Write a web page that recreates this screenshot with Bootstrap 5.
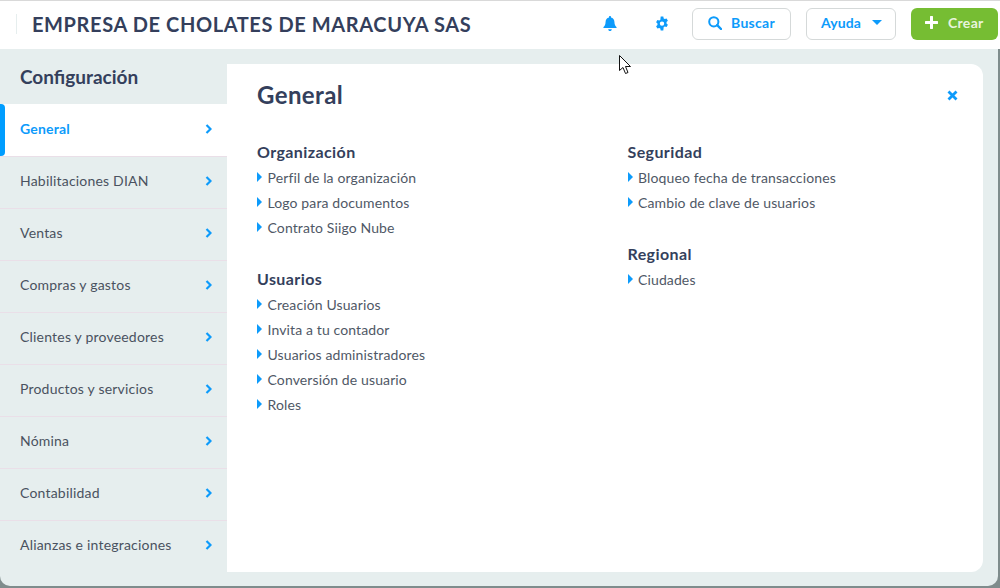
<!DOCTYPE html>
<html lang="es">
<head>
<meta charset="utf-8">
<title>Configuración</title>
<link href="https://cdn.jsdelivr.net/npm/bootstrap@5.3.0/dist/css/bootstrap.min.css" rel="stylesheet">
<style>
html,body{height:100%;}
body{width:1000px;height:588px;overflow:hidden;background:#7f8c8c;font-family:"Lato","Noto Sans",sans-serif;color:#3a4456;position:relative;}
.shell{height:586px;width:998px;display:flex;flex-direction:column;}
.topbar{height:49px;flex:none;background:#fff;border-top:1px solid #d9d9d9;width:1000px;display:flex;align-items:center;padding:0 2px 3px 16px;}
.top-sep{width:1px;height:20px;background:#e6eeee;margin-right:15px;}
.company{font-size:20px;font-weight:700;color:#343f5c;margin:0;letter-spacing:.6px;}
.tool-ico{width:14px;height:15px;display:block;}
.bell-w{margin-right:38px;}
.gear-w{margin-right:23px;}
.tool-btn{height:32px;border:1px solid #d5d9d9;border-radius:6px;background:#fff;color:#0d9bfb;font-size:14px;font-weight:700;display:flex;align-items:center;padding:0 0 2px;letter-spacing:.1px;}
.btn-search{width:99px;padding-left:15px;gap:9px;margin-right:15px;letter-spacing:.3px;}
.btn-help{width:90px;padding-left:14px;gap:11px;margin-right:15px;}
.btn-new{width:87px;height:32px;background:#76bd33;border:0;border-radius:6px;color:#e9f4dd;font-size:14px;font-weight:700;display:flex;align-items:center;padding:0 0 2px 14px;gap:10px;letter-spacing:.3px;}
.caret-d{width:0;height:0;border-left:5px solid transparent;border-right:5px solid transparent;border-top:5px solid #0d9bfb;}
.body-area{flex:1;background:#e6eeee;display:flex;border-radius:0 0 10px 10px;min-height:0;width:998px;}
.side{width:227px;flex:none;}
.side-title{height:55px;font-size:19px;font-weight:700;color:#343f5c;padding:15px 0 0 20px;margin:0;line-height:26px;}
.side-item{height:52px;display:flex;align-items:center;justify-content:space-between;padding:0 15px 4px 20px;border-top:1px solid #eadfe8;font-size:14px;color:#4a5260;position:relative;text-decoration:none;letter-spacing:.2px;}
.side-item.on{background:#fff;color:#0d9bfb;font-weight:700;border-top:0;padding-bottom:3px;}
.side-item.on::before{content:"";position:absolute;left:0;top:0;bottom:0;width:5px;background:#009dff;border-radius:0 4px 4px 0;}
.panel{width:756px;margin:15px 0 14px;background:#fff;border-radius:0 12px 12px 0;padding:17px 25px 0 30px;}
.panel-head{display:flex;justify-content:space-between;align-items:center;height:28px;margin-bottom:31px;}
.panel-title{font-size:24px;font-weight:700;color:#343f5c;margin:0;letter-spacing:.4px;}
.cols{display:grid;grid-template-columns:370.5px 1fr;}
.grp{margin-bottom:27px;}
.grp-title{font-size:16px;font-weight:700;color:#343f5c;margin:0;line-height:24px;height:25px;letter-spacing:.4px;}
.grp-list{list-style:none;padding:0;margin:0;}
.grp-list li{height:25px;line-height:25px;font-size:14px;color:#4f5866;display:flex;align-items:center;gap:5.5px;letter-spacing:.12px;}
.tri{width:0;height:0;border-top:5px solid transparent;border-bottom:5px solid transparent;border-left:5px solid #0d9bfb;margin-top:-2px;}
.cursor{position:absolute;left:619px;top:55px;}
</style>
</head>
<body>
<div class="shell">
  <header class="topbar">
    <div class="top-sep"></div>
    <h1 class="company flex-grow-1">EMPRESA DE CHOLATES DE MARACUYA SAS</h1>
    <span class="bell-w"><svg class="tool-ico" viewBox="0 0 14 15"><path fill="#0d9bfb" d="M7 0c.6 0 1 .4 1 1v.6c2 .4 3.4 2.100 3.400 4.200 0 3.400 1.500 4.600 2.100 5.300.3.400 0 1-.5 1H1c-.5 0-.8-.6-.5-1C1.100 10.400 2.600 9.200 2.600 5.800c0-2.100 1.400-3.800 3.400-4.200V1c0-.6.400-1 1-1zM5.200 13.200h3.600C8.800 14.200 8 15 7 15s-1.800-.8-1.800-1.800z"/></svg></span>
    <span class="gear-w"><svg class="tool-ico" viewBox="0 0 14 14"><path fill="#0d9bfb" fill-rule="evenodd" d="M5.700 0h2.600l.4 1.900c.4.200.8.400 1.100.6l1.800-.6 1.300 2.300-1.400 1.300c.1.500.1.900 0 1.400l1.400 1.300-1.300 2.300-1.800-.6c-.3.200-.7.400-1.100.6L8.300 14H5.700l-.4-1.900c-.4-.2-.8-.4-1.100-.6l-1.800.6L1.100 9.800l1.400-1.300c-.1-.5-.1-.9 0-1.400L1.100 5.800l1.300-2.300 1.800.6c.3-.2.700-.4 1.100-.6zM7 4.900a2.200 2.200 0 1 0 0 4.400 2.200 2.200 0 0 0 0-4.400z"/></svg></span>
    <button type="button" class="tool-btn btn-search"><svg width="14" height="14" viewBox="0 0 14 14"><circle cx="5.800" cy="5.800" r="4.600" fill="none" stroke="#0d9bfb" stroke-width="2"/><path d="M9.200 9.200l3.800 3.800" stroke="#0d9bfb" stroke-width="2.400" stroke-linecap="round"/></svg>Buscar</button>
    <button type="button" class="tool-btn btn-help">Ayuda<span class="caret-d"></span></button>
    <button type="button" class="btn-new"><svg width="13" height="13" viewBox="0 0 13 13"><path d="M6.500 1v11M1 6.500h11" stroke="#fff" stroke-width="3" stroke-linecap="round"/></svg>Crear</button>
  </header>
  <div class="body-area">
    <nav class="side">
      <h2 class="side-title">Configuración</h2>
      <a class="side-item on">General<svg width="7" height="10" viewBox="0 0 7 10"><path d="M1.500 1l4 4-4 4" fill="none" stroke="#0d9bfb" stroke-width="2.200"/></svg></a>
      <a class="side-item">Habilitaciones DIAN<svg width="7" height="10" viewBox="0 0 7 10"><path d="M1.500 1l4 4-4 4" fill="none" stroke="#0d9bfb" stroke-width="2.200"/></svg></a>
      <a class="side-item">Ventas<svg width="7" height="10" viewBox="0 0 7 10"><path d="M1.500 1l4 4-4 4" fill="none" stroke="#0d9bfb" stroke-width="2.200"/></svg></a>
      <a class="side-item">Compras y gastos<svg width="7" height="10" viewBox="0 0 7 10"><path d="M1.500 1l4 4-4 4" fill="none" stroke="#0d9bfb" stroke-width="2.200"/></svg></a>
      <a class="side-item">Clientes y proveedores<svg width="7" height="10" viewBox="0 0 7 10"><path d="M1.500 1l4 4-4 4" fill="none" stroke="#0d9bfb" stroke-width="2.200"/></svg></a>
      <a class="side-item">Productos y servicios<svg width="7" height="10" viewBox="0 0 7 10"><path d="M1.500 1l4 4-4 4" fill="none" stroke="#0d9bfb" stroke-width="2.200"/></svg></a>
      <a class="side-item">Nómina<svg width="7" height="10" viewBox="0 0 7 10"><path d="M1.500 1l4 4-4 4" fill="none" stroke="#0d9bfb" stroke-width="2.200"/></svg></a>
      <a class="side-item">Contabilidad<svg width="7" height="10" viewBox="0 0 7 10"><path d="M1.500 1l4 4-4 4" fill="none" stroke="#0d9bfb" stroke-width="2.200"/></svg></a>
      <a class="side-item">Alianzas e integraciones<svg width="7" height="10" viewBox="0 0 7 10"><path d="M1.500 1l4 4-4 4" fill="none" stroke="#0d9bfb" stroke-width="2.200"/></svg></a>
    </nav>
    <main class="panel">
      <div class="panel-head">
        <h2 class="panel-title">General</h2>
        <svg width="11" height="11" viewBox="0 0 11 11"><path d="M1.500 1.500l8 8M9.500 1.500l-8 8" stroke="#0d9bfb" stroke-width="2.800"/></svg>
      </div>
      <div class="cols">
        <div>
          <section class="grp">
            <h3 class="grp-title">Organización</h3>
            <ul class="grp-list">
              <li><span class="tri"></span>Perfil de la organización</li>
              <li><span class="tri"></span>Logo para documentos</li>
              <li><span class="tri"></span>Contrato Siigo Nube</li>
            </ul>
          </section>
          <section class="grp">
            <h3 class="grp-title">Usuarios</h3>
            <ul class="grp-list">
              <li><span class="tri"></span>Creación Usuarios</li>
              <li><span class="tri"></span>Invita a tu contador</li>
              <li><span class="tri"></span>Usuarios administradores</li>
              <li><span class="tri"></span>Conversión de usuario</li>
              <li><span class="tri"></span>Roles</li>
            </ul>
          </section>
        </div>
        <div>
          <section class="grp">
            <h3 class="grp-title">Seguridad</h3>
            <ul class="grp-list">
              <li><span class="tri"></span>Bloqueo fecha de transacciones</li>
              <li><span class="tri"></span>Cambio de clave de usuarios</li>
            </ul>
          </section>
          <section class="grp">
            <h3 class="grp-title">Regional</h3>
            <ul class="grp-list">
              <li><span class="tri"></span>Ciudades</li>
            </ul>
          </section>
        </div>
      </div>
    </main>
  </div>
</div>
<svg class="cursor" width="13" height="20" viewBox="0 0 13 20"><path d="M.5.500v15l3.500-3 2.500 6 2.500-1-2.500-6h5z" fill="#fff" stroke="#111" stroke-width="1"/></svg>
<script src="https://cdn.jsdelivr.net/npm/bootstrap@5.3.0/dist/js/bootstrap.bundle.min.js"></script>
</body>
</html>
